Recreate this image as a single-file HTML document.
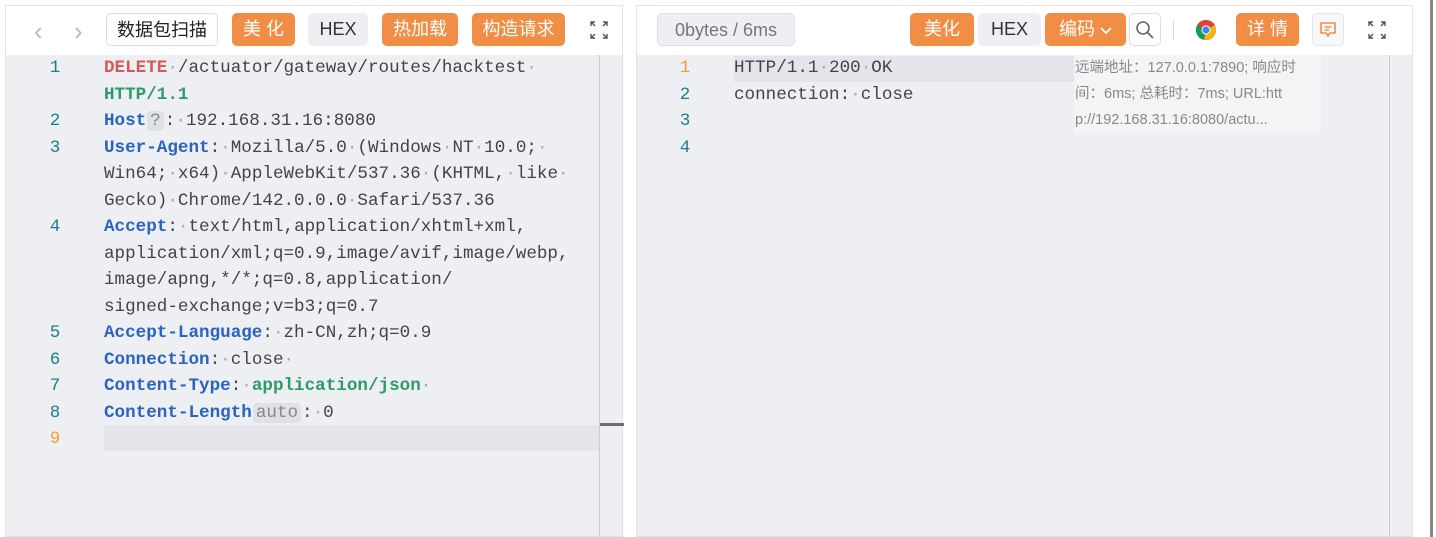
<!DOCTYPE html>
<html><head><meta charset="utf-8"><style>
*{margin:0;padding:0;box-sizing:border-box}
body{width:1436px;height:537px;background:#fff;position:relative;overflow:hidden;font-family:"Liberation Sans","Noto Sans CJK SC",sans-serif}
.panel{position:absolute;top:5px;bottom:0;background:#eeeff3;border:1px solid #e2e3e8}
.bar{position:absolute;left:0;right:0;top:0;height:49px;background:#fff}
.btn{position:absolute;top:7px;height:33px;line-height:33px;font-size:18px;text-align:center;border-radius:5px}
.o{background:#f28d45;color:#fff}
.g{background:#eeeff2;color:#333}
.code{position:absolute;font-family:"Liberation Mono",monospace;font-size:17.6px;line-height:26.5px;white-space:pre;color:#444}
.ln{position:absolute;font-family:"Liberation Mono",monospace;font-size:17.6px;line-height:26.5px;color:#1a7f8c;text-align:center;width:30px}
.k{color:#2a63c6;font-weight:bold}.r{color:#d45a5a;font-weight:bold}.gr{color:#2f9a6a}.b{font-weight:bold}.d{color:#aaa}
.tag{background:#dfe1e6;color:#888;border-radius:4px;padding:0 3px;margin:0 1px}
.exp{position:absolute;top:15px}
</style></head><body>
<div class="panel" style="left:5px;width:618px">
 <div class="bar"></div>
 <div style="position:absolute;left:28px;top:10px;font-size:26px;color:#bbb">&#8249;</div>
 <div style="position:absolute;left:68px;top:10px;font-size:26px;color:#bbb">&#8250;</div>
 <div class="btn" style="left:100px;width:112px;background:#fff;border:1px solid #ddd;color:#222">数据包扫描</div>
 <div class="btn o" style="left:226px;width:63px">美 化</div>
 <div class="btn g" style="left:302px;width:60px">HEX</div>
 <div class="btn o" style="left:376px;width:76px">热加载</div>
 <div class="btn o" style="left:466px;width:93px">构造请求</div>
 <svg class="exp" style="left:584px" width="18" height="18" viewBox="0 0 18 18" fill="none" stroke="#555" stroke-width="1.4"><path d="M1 5V1h4M1 1l4 4M17 5V1h-4M17 1l-4 4M1 13v4h4M1 17l4-4M17 13v4h-4M17 17l-4-4"/></svg>
 <div style="position:absolute;left:593px;top:49px;bottom:0;width:1px;background:#ccc"></div>
 <div style="position:absolute;left:594px;top:417px;width:24px;height:3px;background:#6e6e6e"></div>
 <div style="position:absolute;left:98px;top:419px;width:495px;height:26px;background:#e4e5ea"></div>
</div>
<div class="ln" style="left:40px;top:55px">1<br><br>2<br>3<br><br><br>4<br><br><br><br>5<br>6<br>7<br>8<br><span style="color:#f0a030">9</span></div>
<div class="code" style="left:104px;top:55px"><span class="r">DELETE</span><span class="d">·</span>/actuator/gateway/routes/hacktest<span class="d">·</span>
<span class="gr b">HTTP/1.1</span>
<span class="k">Host</span><span class="tag">?</span>:<span class="d">·</span>192.168.31.16:8080
<span class="k">User-Agent</span>:<span class="d">·</span>Mozilla/5.0<span class="d">·</span>(Windows<span class="d">·</span>NT<span class="d">·</span>10.0;<span class="d">·</span>
Win64;<span class="d">·</span>x64)<span class="d">·</span>AppleWebKit/537.36<span class="d">·</span>(KHTML,<span class="d">·</span>like<span class="d">·</span>
Gecko)<span class="d">·</span>Chrome/142.0.0.0<span class="d">·</span>Safari/537.36
<span class="k">Accept</span>:<span class="d">·</span>text/html,application/xhtml+xml,
application/xml;q=0.9,image/avif,image/webp,
image/apng,*/*;q=0.8,application/
signed-exchange;v=b3;q=0.7
<span class="k">Accept-Language</span>:<span class="d">·</span>zh-CN,zh;q=0.9
<span class="k">Connection</span>:<span class="d">·</span>close<span class="d">·</span>
<span class="k">Content-Type</span>:<span class="d">·</span><span class="gr b">application/json</span><span class="d">·</span>
<span class="k">Content-Length</span><span class="tag">auto</span>:<span class="d">·</span>0</div>

<div class="panel" style="left:636px;width:777px">
 <div class="bar"></div>
 <div class="btn" style="left:20px;width:138px;background:#eeeff2;color:#777;border:1px solid #e0e0e4">0bytes / 6ms</div>
 <div class="btn o" style="left:273px;width:64px">美化</div>
 <div class="btn g" style="left:341px;width:63px">HEX</div>
 <div class="btn o" style="left:408px;width:81px">编码 <svg width="12" height="8" viewBox="0 0 12 8"><path d="M1 1l5 5 5-5" fill="none" stroke="#fff" stroke-width="1.6"/></svg></div>
 <div class="btn" style="left:492px;width:32px;border:1px solid #ddd;background:#fff;color:#666">
  <svg width="20" height="20" viewBox="0 0 20 20" style="margin-top:6px"><circle cx="8" cy="8" r="6" fill="none" stroke="#666" stroke-width="1.6"/><line x1="12.5" y1="12.5" x2="18" y2="18" stroke="#666" stroke-width="1.6"/></svg></div>
 <div style="position:absolute;left:536px;top:14px;width:1px;height:20px;background:#ddd"></div>
 <svg style="position:absolute;left:558px;top:13px" width="22" height="22" viewBox="0 0 22 22"><circle cx="11" cy="11" r="10" fill="#db4437"/><path d="M11 11 L2.3 6 A10 10 0 0 0 9 20.8Z" fill="#0f9d58"/><path d="M11 11 L9 20.8 A10 10 0 0 0 19.7 6Z" fill="#f4b400"/><path d="M11 1 A10 10 0 0 0 2.3 6 L11 11 L19.7 6 A10 10 0 0 0 11 1Z" fill="#db4437"/><circle cx="11" cy="11" r="4.6" fill="#fff"/><circle cx="11" cy="11" r="3.6" fill="#4285f4"/></svg>
 <div class="btn o" style="left:599px;width:63px">详 情</div>
 <div class="btn" style="left:675px;width:32px;border:1px solid #e5e5e8;background:#f7f7f9">
  <svg width="18" height="18" viewBox="0 0 18 18" style="margin-top:7px"><path d="M2 2h14v10h-5l-2 3-2-3H2z" fill="none" stroke="#f28d45" stroke-width="1.6" stroke-linejoin="round"/><line x1="5.5" y1="6" x2="12.5" y2="6" stroke="#f28d45" stroke-width="1.4"/><line x1="5.5" y1="9" x2="10" y2="9" stroke="#f28d45" stroke-width="1.4"/></svg></div>
 <svg class="exp" style="left:731px" width="18" height="18" viewBox="0 0 18 18" fill="none" stroke="#555" stroke-width="1.4"><path d="M1 5V1h4M1 1l4 4M17 5V1h-4M17 1l-4 4M1 13v4h4M1 17l4-4M17 13v4h-4M17 17l-4-4"/></svg>
 <div style="position:absolute;left:752px;top:49px;bottom:0;width:1px;background:#ccc"></div>
 <div style="position:absolute;left:97px;top:50px;width:340px;height:26px;background:#e4e5ea"></div>
 <div style="position:absolute;left:437px;top:49px;width:247px;height:78px;background:#f3f4f6;font-size:14.5px;color:#888;line-height:26px;padding-left:1px">远端地址：127.0.0.1:7890; 响应时<br>间：6ms; 总耗时：7ms; URL:htt<br>p://192.168.31.16:8080/actu...</div>
</div>
<div class="ln" style="left:670px;top:55px"><span style="color:#f0a030">1</span><br>2<br>3<br>4</div>
<div class="code" style="left:734px;top:55px">HTTP/1.1<span class="d">·</span>200<span class="d">·</span>OK
connection:<span class="d">·</span>close</div>
<div style="position:absolute;left:1430px;top:0;bottom:0;width:3px;background:#888"></div>
</body></html>
